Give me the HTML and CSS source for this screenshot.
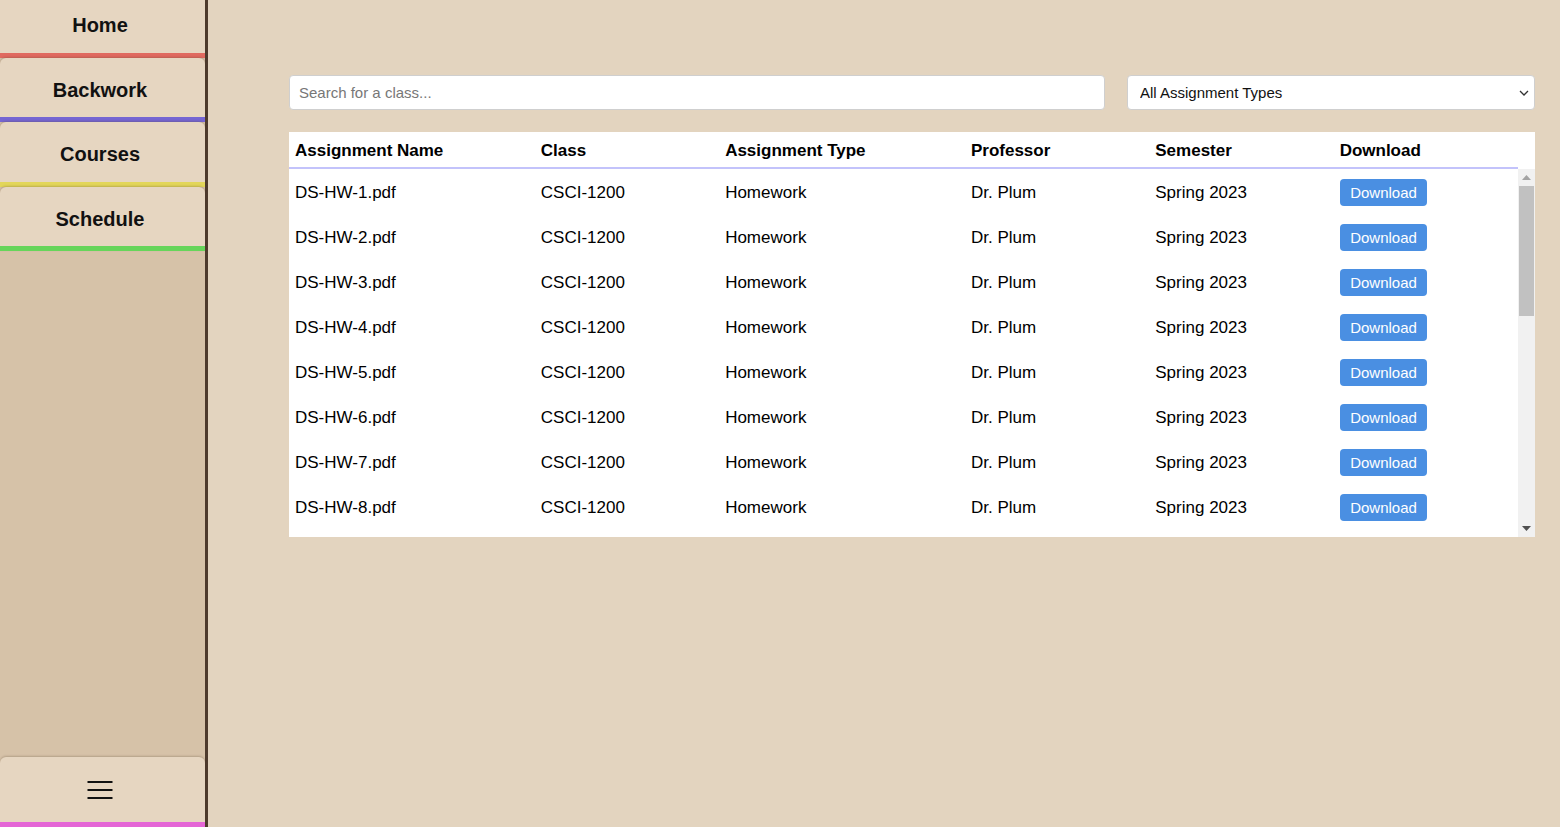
FILE: index.html
```html
<!DOCTYPE html>
<html lang="en">
<head>
<meta charset="utf-8">
<title>Backwork</title>
<link rel="stylesheet" href="styles.css">
</head>
<body>
<aside class="sidebar">
  <nav class="nav">
    <a class="nav-item nav-red" href="#">Home</a>
    <a class="nav-item nav-purple" href="#">Backwork</a>
    <a class="nav-item nav-yellow" href="#">Courses</a>
    <a class="nav-item nav-green" href="#">Schedule</a>
  </nav>
  <button class="menu-btn" type="button" aria-label="Menu">
    <svg width="26" height="20" viewBox="0 0 26 20"><path d="M0.5 2h25M0.5 10h25M0.5 18h25" stroke="#111" stroke-width="2"/></svg>
  </button>
</aside>
<main class="main">
  <div class="filters">
    <input class="search" type="text" placeholder="Search for a class...">
    <div class="select-wrap">
      <select class="select">
        <option>All Assignment Types</option>
        <option>Homework</option>
        <option>Exam</option>
      </select>
      <svg class="chev" width="10" height="6" viewBox="0 0 10 6"><path d="M1 1l4 4 4-4" fill="none" stroke="#333" stroke-width="1.3"/></svg>
    </div>
  </div>
  <section class="table-card">
    <table class="head-table">
      <colgroup><col class="c1"><col class="c2"><col class="c1"><col class="c2"><col class="c2"><col class="c2"></colgroup>
      <thead>
        <tr><th>Assignment Name</th><th>Class</th><th>Assignment Type</th><th>Professor</th><th>Semester</th><th>Download</th></tr>
      </thead>
    </table>
    <div class="scroll-area">
      <div class="body-scroll">
        <table class="body-table">
          <colgroup><col class="c1"><col class="c2"><col class="c1"><col class="c2"><col class="c2"><col class="c2"></colgroup>
          <tbody>
            <tr><td>DS-HW-1.pdf</td><td>CSCI-1200</td><td>Homework</td><td>Dr. Plum</td><td>Spring 2023</td><td><button class="dl">Download</button></td></tr>
            <tr><td>DS-HW-2.pdf</td><td>CSCI-1200</td><td>Homework</td><td>Dr. Plum</td><td>Spring 2023</td><td><button class="dl">Download</button></td></tr>
            <tr><td>DS-HW-3.pdf</td><td>CSCI-1200</td><td>Homework</td><td>Dr. Plum</td><td>Spring 2023</td><td><button class="dl">Download</button></td></tr>
            <tr><td>DS-HW-4.pdf</td><td>CSCI-1200</td><td>Homework</td><td>Dr. Plum</td><td>Spring 2023</td><td><button class="dl">Download</button></td></tr>
            <tr><td>DS-HW-5.pdf</td><td>CSCI-1200</td><td>Homework</td><td>Dr. Plum</td><td>Spring 2023</td><td><button class="dl">Download</button></td></tr>
            <tr><td>DS-HW-6.pdf</td><td>CSCI-1200</td><td>Homework</td><td>Dr. Plum</td><td>Spring 2023</td><td><button class="dl">Download</button></td></tr>
            <tr><td>DS-HW-7.pdf</td><td>CSCI-1200</td><td>Homework</td><td>Dr. Plum</td><td>Spring 2023</td><td><button class="dl">Download</button></td></tr>
            <tr><td>DS-HW-8.pdf</td><td>CSCI-1200</td><td>Homework</td><td>Dr. Plum</td><td>Spring 2023</td><td><button class="dl">Download</button></td></tr>
          </tbody>
        </table>
      </div>
      <div class="scrollbar" aria-hidden="true">
        <div class="sb-btn">
          <svg width="9" height="5" viewBox="0 0 9 5"><path d="M0 5L4.5 0L9 5z" fill="#a3a3a3"/></svg>
        </div>
        <div class="sb-track"><div class="sb-thumb"></div></div>
        <div class="sb-btn">
          <svg width="9" height="5" viewBox="0 0 9 5"><path d="M0 0L9 0L4.5 5z" fill="#505050"/></svg>
        </div>
      </div>
    </div>
  </section>
</main>
</body>
</html>
```
FILE: styles.css
```css
* { box-sizing: border-box; }
html, body { margin: 0; height: 100%; }
body {
  display: flex;
  background: #e3d4bf;
  font-family: "Liberation Sans", Arial, sans-serif;
  color: #000;
  overflow: hidden;
}
.sidebar {
  width: 208px;
  flex: 0 0 208px;
  height: 827px;
  background: #d6c2a8;
  border-right: 3px solid #4e3b2d;
  display: flex;
  flex-direction: column;
  justify-content: space-between;
}
.nav {
  display: flex;
  flex-direction: column;
  margin-top: -7px;
}
.nav-item {
  display: block;
  background: #e6d6c1;
  text-align: center;
  text-decoration: none;
  color: #111;
  font-weight: bold;
  font-size: 20px;
  line-height: 23px;
  padding: 21px 5px 15.5px 0;
  border-bottom: 5px solid;
  border-radius: 6px 6px 0 0;
  box-shadow: 0 -1px 2px rgba(80, 60, 40, 0.25);
}
.nav-red { border-bottom-color: #e06a60; }
.nav-purple { border-bottom-color: #7566d3; }
.nav-yellow { border-bottom-color: #e2d65a; }
.nav-green { border-bottom-color: #66d55a; }
.menu-btn {
  display: flex;
  align-items: center;
  justify-content: center;
  width: 100%;
  height: 70px;
  padding: 0 5px 0 0;
  background: #e6d6c1;
  border: 0;
  border-bottom: 5px solid #e466d6;
  border-radius: 6px 6px 0 0;
  box-shadow: 0 -1px 2px rgba(80, 60, 40, 0.25);
  cursor: pointer;
}
.main {
  flex: 1;
  min-width: 0;
  padding: 75px 25px 0 81px;
}
.filters {
  display: grid;
  grid-template-columns: minmax(0, 2fr) minmax(0, 1fr);
  gap: 22px;
}
.search {
  width: 100%;
  min-width: 0;
  height: 35px;
  border: 1px solid #cfcfcf;
  border-radius: 4px;
  padding: 0 9px;
  font-family: "Liberation Sans", Arial, sans-serif;
  font-size: 15px;
  color: #111;
  background: #fff;
  outline: none;
}
.search::placeholder { color: #777; }
.select-wrap {
  min-width: 0;
  position: relative;
  display: flex;
}
.select {
  flex: 1;
  min-width: 0;
  height: 35px;
  appearance: none;
  -webkit-appearance: none;
  border: 1px solid #cfcfcf;
  border-radius: 4px;
  padding: 0 12px;
  font-family: "Liberation Sans", Arial, sans-serif;
  font-size: 15px;
  color: #111;
  background: #fff;
  outline: none;
}
.chev {
  position: absolute;
  right: 6px;
  top: 15px;
  pointer-events: none;
}
.table-card {
  margin-top: 22px;
  background: #fff;
}
table {
  border-collapse: collapse;
  table-layout: fixed;
}
.c1 { width: 20%; }
.c2 { width: 15%; }
.head-table {
  width: calc(100% - 17px);
  border-bottom: 2px solid #c3c3fb;
}
.head-table th {
  text-align: left;
  font-size: 17px;
  font-weight: bold;
  height: 36px;
  padding: 2px 6px 0;
  vertical-align: middle;
}
.scroll-area {
  display: flex;
  height: 368px;
}
.body-scroll {
  flex: 1;
  min-width: 0;
  overflow: hidden;
}
.body-table { width: 100%; }
.body-table td {
  font-size: 17px;
  height: 45px;
  padding: 2px 6px 0;
  vertical-align: middle;
  white-space: nowrap;
}
.dl {
  height: 27px;
  margin-top: -1px;
  padding: 0 10.5px;
  border: 0;
  border-radius: 4px;
  background: #4a8fe2;
  color: #fff;
  font-family: "Liberation Sans", Arial, sans-serif;
  font-size: 15px;
  cursor: pointer;
}
.scrollbar {
  width: 17px;
  flex: 0 0 17px;
  background: #f1f1f1;
  display: flex;
  flex-direction: column;
}
.sb-btn {
  height: 17px;
  flex: 0 0 17px;
  display: flex;
  align-items: center;
  justify-content: center;
}
.sb-btn svg { display: block; }
.sb-track {
  flex: 1;
  padding: 0 1px;
}
.sb-thumb {
  height: 130px;
  background: #c1c1c1;
}
```
